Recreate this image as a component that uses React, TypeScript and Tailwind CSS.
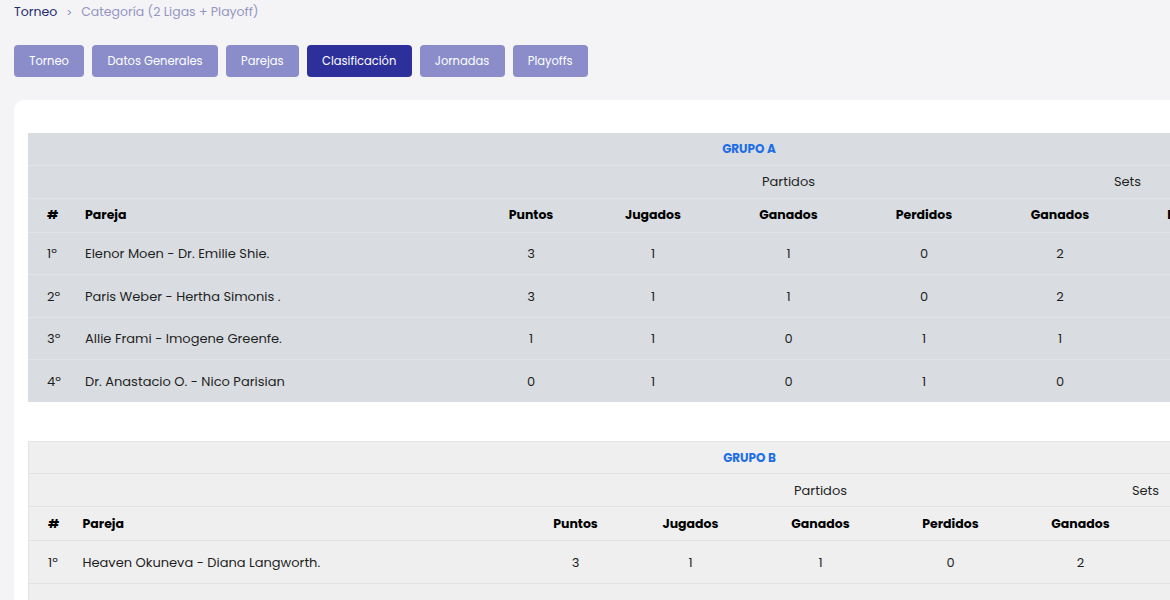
import React from "react";

type Row = { pos: string; pareja: string; v: number[] };

const grupoA: Row[] = [
  { pos: "1º", pareja: "Elenor Moen - Dr. Emilie Shie.", v: [3, 1, 1, 0, 2, 0, 12, 4] },
  { pos: "2º", pareja: "Paris Weber - Hertha Simonis .", v: [3, 1, 1, 0, 2, 0, 12, 6] },
  { pos: "3º", pareja: "Allie Frami - Imogene Greenfe.", v: [1, 1, 0, 1, 1, 2, 10, 12] },
  { pos: "4º", pareja: "Dr. Anastacio O. - Nico Parisian", v: [0, 1, 0, 1, 0, 2, 4, 12] },
];

const grupoB: Row[] = [
  { pos: "1º", pareja: "Heaven Okuneva - Diana Langworth.", v: [3, 1, 1, 0, 2, 0, 12, 5] },
  { pos: "2º", pareja: "Maribel Koelpin - Kaya Auer .", v: [3, 1, 1, 0, 2, 1, 13, 9] },
  { pos: "3º", pareja: "Lenna Hartmann - Ora Batz.", v: [0, 1, 0, 1, 1, 2, 9, 13] },
];

const tabs = ["Torneo", "Datos Generales", "Parejas", "Clasificación", "Jornadas", "Playoffs"];

function Tabla({ titulo, rows, cols, dark }: { titulo: string; rows: Row[]; cols: number[]; dark?: boolean }) {
  const rowCls = dark ? "border-b border-[#e0e3e7]" : "border-b border-[#e2e2e2]";
  return (
    <table
      className={`table-fixed border-collapse text-[13px] text-[#1f1f1f] ${dark ? "bg-[#d9dde1]" : "bg-[#efefef] border border-[#e3e3e3]"}`}
      style={{ width: cols.reduce((a, b) => a + b, 0) }}
    >
      <colgroup>
        {cols.map((w, i) => (
          <col key={i} style={{ width: w }} />
        ))}
      </colgroup>
      <thead>
        <tr className={`h-[32px] ${rowCls}`}>
          <th colSpan={10} className="pt-[1px] text-center text-[12px] font-bold text-[#1d6ee6]">
            {titulo}
          </th>
        </tr>
        <tr className={`h-[33px] ${rowCls}`}>
          <th colSpan={3}></th>
          <th colSpan={3} className="pt-[1px] text-center font-normal">Partidos</th>
          <th colSpan={2} className="pt-[1px] text-center font-normal">Sets</th>
          <th colSpan={2} className="pt-[1px] text-center font-normal">Juegos</th>
        </tr>
        <tr className={`h-[34px] ${rowCls} text-[12.5px] font-bold text-black`}>
          <th className="pl-[19px] pt-[1px] text-left">#</th>
          <th className="pl-[18px] pt-[1px] text-left">Pareja</th>
          <th className="pt-[1px] text-center">Puntos</th>
          <th className="pt-[1px] text-center">Jugados</th>
          <th className="pt-[1px] text-center">Ganados</th>
          <th className="pt-[1px] text-center">Perdidos</th>
          <th className="pt-[1px] text-center">Ganados</th>
          <th className="pt-[1px] text-center">Perdidos</th>
          <th className="pt-[1px] text-center">Ganados</th>
          <th className="pt-[1px] text-center">Perdidos</th>
        </tr>
      </thead>
      <tbody>
        {rows.map((r) => (
          <tr key={r.pos} className={`h-[42.5px] ${rowCls} last:border-b-0`}>
            <td className="pl-[19px] pt-[1px]">{r.pos}</td>
            <td className="pl-[18px] pt-[1px] whitespace-nowrap">{r.pareja}</td>
            {r.v.map((n, i) => (
              <td key={i} className="pt-[1px] text-center">
                {n}
              </td>
            ))}
          </tr>
        ))}
      </tbody>
    </table>
  );
}

export default function App() {
  return (
    <div className="min-h-screen w-[1170px] overflow-hidden bg-[#f4f4f7] font-['Poppins','Open_Sans',sans-serif]">
      <div className="px-[14px] pt-[3px]">
        {/* Breadcrumb */}
        <div className="flex items-center gap-[9px] text-[12.5px] h-[18px]">
          <span className="text-[#262a6e]">Torneo</span>
          <span className="text-[#8a8cb8] text-[11px]">&gt;</span>
          <span className="text-[#9496c2]">Categoría (2 Ligas + Playoff)</span>
        </div>

        {/* Tabs */}
        <div className="mt-[24px] flex gap-[8px]">
          {tabs.map((t) => (
            <button
              key={t}
              className={`h-[32px] rounded-[4px] px-[15.25px] pt-[2px] text-[11.5px] font-normal text-white ${
                t === "Clasificación" ? "bg-[#2d2f9a]" : "bg-[#8a8dca]"
              }`}
            >
              {t}
            </button>
          ))}
        </div>

        {/* Card */}
        <div className="mt-[23px] w-[1500px] rounded-[10px] bg-white pl-[14px] pt-[33px] pb-[40px]">
          <Tabla titulo="GRUPO A" rows={grupoA} cols={[39, 410, 108, 136, 135, 136, 136, 135, 104, 103]} dark />
          <div className="h-[39px]" />
          <Tabla titulo="GRUPO B" rows={grupoB} cols={[36, 461, 100, 130, 130, 130, 130, 130, 98, 97]} />
        </div>
      </div>
    </div>
  );
}
